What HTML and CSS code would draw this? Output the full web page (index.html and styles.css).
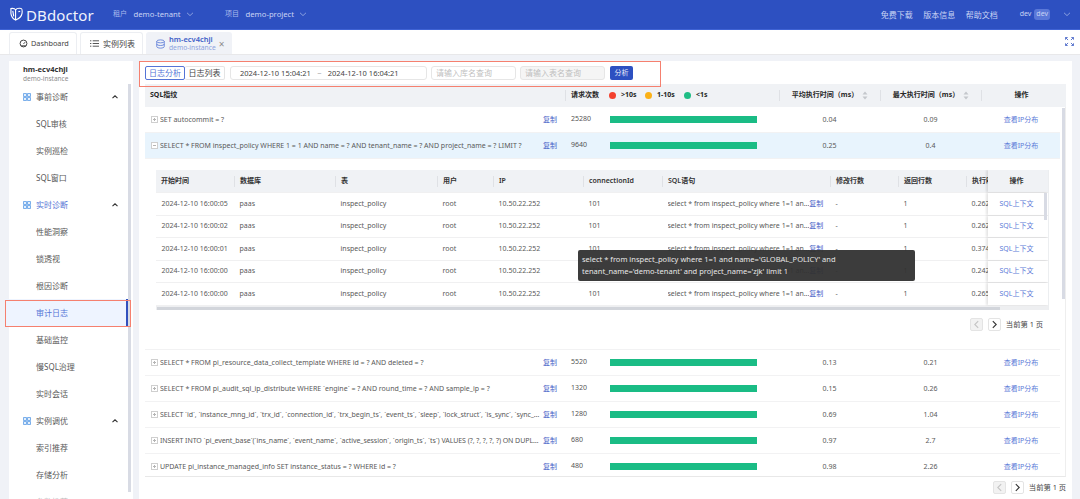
FILE: index.html
```html
<!DOCTYPE html>
<html lang="zh-CN">
<head>
<meta charset="utf-8">
<title>DBdoctor 审计日志</title>
<link rel="stylesheet" href="styles.css">
</head>
<body>
<svg class="defs" width="0" height="0" aria-hidden="true">
  <defs>
    <symbol id="grid" viewBox="0 0 8 8"><path d="M.5.5h3v3h-3zM4.5.5h3v3h-3zM.5 4.5h3v3h-3zM4.5 4.5h3v3h-3z" fill="#e3effc" stroke="#5c9ce6" stroke-width=".8"/></symbol>
    <symbol id="up" viewBox="0 0 8 8"><path d="M1.5 5.2 4 2.8l2.5 2.4" fill="none" stroke="#333" stroke-width="1.1"/></symbol>
    <symbol id="down" viewBox="0 0 8 8"><path d="M1 2.8 4 5.6l3-2.8" fill="none" stroke="#9fb2e6" stroke-width=".8"/></symbol>
    <symbol id="sort" viewBox="0 0 6 9"><path d="M3 .5 5.5 3.6H.5zM3 8.5.5 5.4h5z" fill="#c4c7cc"/></symbol>
  </defs>
</svg>
<header class="topbar">
  <div class="logo">
    <svg class="logo-mark" viewBox="0 0 14 16"><path d="M1 1.500c3-.3 4.500.2 5 1.500v11C3 12.500 1.500 10 1 7zM6 3c1-1.500 3-2 6-1.500 1 .2 1.300 2 1 5-.4 3-3 6-7 7.500M9 5l2-.5M3 4l1 6" fill="none" stroke="#fff" stroke-width="1.200"/></svg>
    <span class="logo-text">DBdoctor</span>
  </div>
  <div class="selector s-tenant"><span class="sel-label">租户</span><span>demo-tenant</span><svg class="caret"><use href="#down"/></svg></div>
  <div class="selector s-project"><span class="sel-label">项目</span><span>demo-project</span><svg class="caret"><use href="#down"/></svg></div>
  <nav class="topnav"><span>免费下载</span><span>版本信息</span><span>帮助文档</span></nav>
  <div class="user"><span>dev</span><span class="badge">dev</span><svg class="caret user-caret"><use href="#down"/></svg></div>
</header>
<div class="tabbar">
  <div class="tab tab-dash">
    <svg class="tab-icon" viewBox="0 0 10 10"><circle cx="5" cy="5" r="3.800" fill="none" stroke="#333" stroke-width="1"/><path d="M5 5.500 6.800 3.500M2.500 7.600h5" stroke="#333" stroke-width="1" fill="none"/></svg>
    <span>Dashboard</span>
  </div>
  <div class="tab tab-list">
    <svg class="tab-icon" viewBox="0 0 10 10"><path d="M0 2h1.500M0 5h1.500M0 8h1.500M3 2h7M3 5h7M3 8h7" stroke="#444" stroke-width="1" fill="none"/></svg>
    <span>实例列表</span>
  </div>
  <div class="tab tab-active">
    <svg class="db-icon" viewBox="0 0 12 12"><ellipse cx="6" cy="2.500" rx="5" ry="2" fill="none" stroke="#4c6fd4"/><path d="M1 2.500v7c0 1.100 2.200 2 5 2s5-.9 5-2v-7M1 6c0 1.100 2.200 2 5 2s5-.9 5-2" fill="none" stroke="#4c6fd4"/></svg>
    <div class="tab-text"><strong>hm-ecv4chji</strong><small>demo-instance</small></div>
    <span class="tab-close">×</span>
  </div>
  <svg class="fullscreen" viewBox="0 0 10 10"><path d="M.5 3V.5H3M.8.8l2.600 2.600M7 .5h2.500V3M9.200.8 6.600 3.400M.5 7v2.500H3M.8 9.200l2.600-2.600M9.500 7v2.500H7M9.200 9.200 6.600 6.600" fill="none" stroke="#4a68c8" stroke-width="1"/></svg>
</div>
<div class="workspace">
  <aside class="sidebar">
    <div class="inst"><strong>hm-ecv4chji</strong><small>demo-instance</small></div>
    <div class="menu">
      <div class="group"><svg class="grid-icon"><use href="#grid"/></svg><span>事前诊断</span><svg class="up-icon"><use href="#up"/></svg></div>
      <div class="item">SQL审核</div>
      <div class="item">实例巡检</div>
      <div class="item">SQL窗口</div>
      <div class="group group-on"><svg class="grid-icon"><use href="#grid"/></svg><span>实时诊断</span><svg class="up-icon"><use href="#up"/></svg></div>
      <div class="item">性能洞察</div>
      <div class="item">锁透视</div>
      <div class="item">根因诊断</div>
      <div class="item item-on">审计日志<i class="mark mark-side"></i></div>
      <div class="item">基础监控</div>
      <div class="item">慢SQL治理</div>
      <div class="item">实时会话</div>
      <div class="group"><svg class="grid-icon"><use href="#grid"/></svg><span>实例调优</span><svg class="up-icon"><use href="#up"/></svg></div>
      <div class="item">索引推荐</div>
      <div class="item">存储分析</div>
      <div class="item item-fade">参数推荐</div>
    </div>
    <i class="side-thumb"></i>
  </aside>
  <main class="main">
    <i class="mark mark-filter"></i>
    <div class="filters">
      <div class="seg"><span class="seg-on">日志分析</span><span class="seg-off">日志列表</span></div>
      <div class="field date"><span>2024-12-10 15:04:21</span><span class="tilde">~</span><span>2024-12-10 16:04:21</span></div>
      <div class="field ph">请输入库名查询</div>
      <div class="field ph disabled">请输入表名查询</div>
      <button class="go">分析</button>
    </div>
    <div class="otable">
      <div class="orow ohead">
        <div class="hc hc-first">SQL指纹</div>
        <div class="hc hc-legend">
          <span class="req">请求次数</span>
          <i class="dot red"></i><span class="lg lg1">&gt;10s</span>
          <i class="dot orange"></i><span class="lg lg2">1-10s</span>
          <i class="dot green"></i><span class="lg">&lt;1s</span>
        </div>
        <div class="hc hc-mid">平均执行时间（ms）<svg class="sort"><use href="#sort"/></svg></div>
        <div class="hc hc-mid">最大执行时间（ms）<svg class="sort"><use href="#sort"/></svg></div>
        <div class="hc hc-center">操作</div>
      </div>
      <div class="obody">
        <i class="main-thumb"></i>
        <div class="orow">
          <div class="sqlcell"><i class="exp plus"></i><span class="sql">SET autocommit = ?</span><a class="copy">复制</a></div>
          <div class="countcell"><span class="count">25280</span><i class="bar"></i></div>
          <div class="num">0.04</div><div class="num">0.09</div><a class="oplink">查看IP分布</a>
        </div>
        <div class="orow orow-on">
          <div class="sqlcell"><i class="exp"></i><span class="sql">SELECT * FROM inspect_policy WHERE 1 = 1 AND name = ? AND tenant_name = ? AND project_name = ? LIMIT ?</span><a class="copy">复制</a></div>
          <div class="countcell"><span class="count">9640</span><i class="bar"></i></div>
          <div class="num">0.25</div><div class="num">0.4</div><a class="oplink">查看IP分布</a>
        </div>
        <section class="expanded">
          <div class="itable">
            <div class="irow ihead">
              <div class="ih ih-first">开始时间</div><div class="ih">数据库</div><div class="ih">表</div><div class="ih">用户</div><div class="ih">IP</div><div class="ih">connectionId</div><div class="ih">SQL语句</div><div class="ih">修改行数</div><div class="ih">返回行数</div><div class="ih ih-clip">执行时间</div><div class="ih fixed">操作</div>
            </div>
            <div class="irow">
              <div>2024-12-10 16:00:05</div><div>paas</div><div>inspect_policy</div><div>root</div><div>10.50.22.252</div><div>101</div><div class="isql"><span>select * from inspect_policy where 1=1 an...</span><a class="copy">复制</a></div><div>-</div><div>1</div><div class="clip">0.262</div><a class="fixed ctx">SQL上下文</a>
            </div>
            <div class="irow">
              <div>2024-12-10 16:00:02</div><div>paas</div><div>inspect_policy</div><div>root</div><div>10.50.22.252</div><div>101</div><div class="isql"><span>select * from inspect_policy where 1=1 an...</span><a class="copy">复制</a></div><div>-</div><div>1</div><div class="clip">0.262</div><a class="fixed ctx">SQL上下文</a>
            </div>
            <div class="irow">
              <div>2024-12-10 16:00:01</div><div>paas</div><div>inspect_policy</div><div>root</div><div>10.50.22.252</div><div>101</div><div class="isql"><span>select * from inspect_policy where 1=1 an...</span><a class="copy">复制</a></div><div>-</div><div>1</div><div class="clip">0.374</div><a class="fixed ctx">SQL上下文</a>
            </div>
            <div class="irow">
              <div>2024-12-10 16:00:00</div><div>paas</div><div>inspect_policy</div><div>root</div><div>10.50.22.252</div><div>101</div><div class="isql"><span>select * from inspect_policy where 1=1 an...</span><a class="copy">复制</a></div><div>-</div><div>1</div><div class="clip">0.242</div><a class="fixed ctx">SQL上下文</a>
            </div>
            <div class="irow">
              <div>2024-12-10 16:00:00</div><div>paas</div><div>inspect_policy</div><div>root</div><div>10.50.22.252</div><div>101</div><div class="isql"><span>select * from inspect_policy where 1=1 an...</span><a class="copy">复制</a></div><div>-</div><div>1</div><div class="clip">0.265</div><a class="fixed ctx">SQL上下文</a>
            </div>
            <div class="hscroll"><i></i></div>
            <i class="inner-thumb"></i>
          </div>
          <div class="pager pager-in">
            <span class="pg pg-off"><svg viewBox="0 0 8 8"><path d="M5.500 1 2.500 4l3 3" fill="none" stroke="#c4c4c4"/></svg></span>
            <span class="pg"><svg viewBox="0 0 8 8"><path d="M2.500 1l3 3-3 3" fill="none" stroke="#333"/></svg></span>
            <span>当前第 1 页</span>
          </div>
        </section>
        <div class="orow">
          <div class="sqlcell"><i class="exp plus"></i><span class="sql">SELECT * FROM pi_resource_data_collect_template WHERE id = ? AND deleted = ?</span><a class="copy">复制</a></div>
          <div class="countcell"><span class="count">5520</span><i class="bar"></i></div>
          <div class="num">0.13</div><div class="num">0.21</div><a class="oplink">查看IP分布</a>
        </div>
        <div class="orow">
          <div class="sqlcell"><i class="exp plus"></i><span class="sql">SELECT * FROM pi_audit_sql_ip_distribute WHERE `engine` = ? AND round_time = ? AND sample_ip = ?</span><a class="copy">复制</a></div>
          <div class="countcell"><span class="count">1320</span><i class="bar"></i></div>
          <div class="num">0.15</div><div class="num">0.26</div><a class="oplink">查看IP分布</a>
        </div>
        <div class="orow">
          <div class="sqlcell"><i class="exp plus"></i><span class="sql ticks">SELECT `id`, `instance_mng_id`, `trx_id`, `connection_id`, `trx_begin_ts`, `event_ts`, `sleep`, `lock_struct`, `is_sync`, `sync_status`, `sync_time`</span><a class="copy">复制</a></div>
          <div class="countcell"><span class="count">1280</span><i class="bar"></i></div>
          <div class="num">0.69</div><div class="num">1.04</div><a class="oplink">查看IP分布</a>
        </div>
        <div class="orow">
          <div class="sqlcell"><i class="exp plus"></i><span class="sql ticks">INSERT INTO `pi_event_base`(`ins_name`, `event_name`, `active_session`, `origin_ts`, `ts`) VALUES (?, ?, ?, ?, ?) ON DUPLICATE KEY UPDATE</span><a class="copy">复制</a></div>
          <div class="countcell"><span class="count">680</span><i class="bar"></i></div>
          <div class="num">0.97</div><div class="num">2.7</div><a class="oplink">查看IP分布</a>
        </div>
        <div class="orow">
          <div class="sqlcell"><i class="exp plus"></i><span class="sql">UPDATE pi_instance_managed_info SET instance_status = ? WHERE id = ?</span><a class="copy">复制</a></div>
          <div class="countcell"><span class="count">480</span><i class="bar"></i></div>
          <div class="num">0.98</div><div class="num">2.26</div><a class="oplink">查看IP分布</a>
        </div>
      </div>
    </div>
    <div class="pager pager-out">
      <span class="pg pg-off"><svg viewBox="0 0 8 8"><path d="M5.500 1 2.500 4l3 3" fill="none" stroke="#c4c4c4"/></svg></span>
      <span class="pg"><svg viewBox="0 0 8 8"><path d="M2.500 1l3 3-3 3" fill="none" stroke="#333"/></svg></span>
      <span>当前第 1 页</span>
    </div>
    <div class="tooltip">select * from inspect_policy where 1=1 and name='GLOBAL_POLICY' and<br>tenant_name='demo-tenant' and project_name='zjk' limit 1</div>
  </main>
</div>
</body>
</html>
```
FILE: styles.css
```css
* { box-sizing: border-box; }
html, body { margin: 0; height: 499px; overflow: hidden; }
body {
  display: flex;
  flex-direction: column;
  background: #f0f2f7;
  color: #595959;
  font: 7px/1.2 "Noto Sans", "Noto Sans CJK SC", sans-serif;
}
i { display: block; font-style: normal; }
.defs { position: absolute; }

.topbar {
  flex: 0 0 30px;
  display: flex;
  align-items: center;
  background: #2d50c1;
  border-bottom: 1px solid #3f63d4;
  color: #c9d4f4;
  font-size: 7.7px;
}
.logo { width: 113px; display: flex; align-items: center; padding-left: 10px; }
.logo-mark { width: 13px; height: 15px; }
.logo-text { margin-left: 3px; color: #f0f3fc; font-size: 15px; letter-spacing: .1px; }
.selector { display: flex; align-items: center; }
.s-tenant { width: 112px; }
.sel-label { margin-right: 6.500px; color: #a9b9ec; font-size: 7px; }
.caret { width: 8px; height: 8px; margin-left: 5px; }
.topnav { margin-left: auto; display: flex; gap: 10.500px; font-size: 8px; }
.user { display: flex; align-items: center; margin-left: 22px; padding-right: 9px; font-size: 7px; }
.badge { margin-left: 3px; padding: 1px 2px; border-radius: 3px; background: #5a78d8; }
.user-caret { margin-left: 13px; }

.tabbar {
  flex: 0 0 25px;
  display: flex;
  align-items: flex-end;
  gap: 3px;
  padding-left: 9px;
  background: #fff;
  border-bottom: 1px solid #e8e8ea;
  color: #444;
  font-size: 8px;
}
.tab {
  height: 22px;
  display: flex;
  align-items: center;
  border: 1px solid #eceef2;
  border-bottom: 0;
  border-radius: 3px 3px 0 0;
}
.tab-dash { width: 68px; padding-left: 9px; font-size: 7.3px; }
.tab-list { width: 63px; padding-left: 9px; }
.tab-icon { width: 9px; height: 9px; margin-right: 3px; }
.tab-list .tab-icon { margin-right: 4px; }
.tab-active { width: 86px; padding-left: 9px; background: #f0f2f7; border-color: #f0f2f7; color: #4c6fd4; }
.db-icon { width: 9px; height: 10px; margin-right: 4px; flex: none; }
.tab-text { display: flex; flex-direction: column; white-space: nowrap; }
.tab-text strong { font-size: 7.5px; font-weight: 600; color: #3f5fc8; }
.tab-text small { font-size: 6.7px; color: #8da3e0; }
.tab-close { margin-left: 3px; color: #8c8c8c; font-size: 10px; }
.fullscreen { width: 9px; height: 9px; margin: 0 6px 8px auto; }

.workspace { flex: 1; min-height: 0; display: flex; gap: 6px; padding: 6px 8px 0 9px; }
.sidebar { position: relative; flex: 0 0 124px; background: #fff; color: #595959; }
.inst { display: flex; flex-direction: column; padding: 4px 0 0 14px; height: 22px; }
.inst strong { font-size: 7.5px; font-weight: 700; color: #333; }
.inst small { font-size: 6.5px; color: #8c8c8c; line-height: 10px; }
.group, .item { height: 27px; display: flex; align-items: center; font-size: 8px; }
.group { padding-left: 14px; position: relative; color: #595959; }
.group-on { color: #5474d6; }
.grid-icon { width: 8px; height: 8px; margin-right: 5px; }
.up-icon { width: 8px; height: 8px; margin-left: 43px; }
.item { padding-left: 27px; position: relative; }
.item-on { color: #5474d6; background: #eef4ff; margin: 0 5px 0 -4px; padding-left: 31px; border-right: 2px solid #3150bd; }
.item-fade { opacity: .4; }
.mark { position: absolute; border: 1.5px solid #f5806f; pointer-events: none; }
.mark-side { left: 0; top: 1px; width: 126px; height: 27px; z-index: 2; }
.mark-filter { left: 0; top: 0; width: 522px; height: 26px; z-index: 2; }
.side-thumb { position: absolute; left: 119px; top: 23px; width: 3px; height: 408px; background: #d8dbe4; }

.main { position: relative; flex: 1; min-width: 0; background: #fff; padding: 0 6px; }
.filters { height: 23px; display: flex; align-items: center; padding-top: 1px; gap: 4px; }
.seg { display: flex; margin-right: 1px; font-size: 8px; }
.seg span { width: 40px; height: 14px; display: flex; align-items: center; justify-content: center; border-radius: 2px; }
.seg-on { border: 1px solid #5474d6; color: #5474d6; }
.seg-off { border: 1px solid #e4e4e4; border-left: 0; color: #444; }
.field { height: 14px; display: flex; align-items: center; border: 1px solid #e6e6e6; border-radius: 3px; padding-left: 4px; font-size: 8px; }
.date { width: 197px; padding-left: 9px; color: #444; font-size: 7.500px; }
.tilde { margin: 0 6.300px; color: #999; }
.ph { width: 85px; color: #bfbfbf; }
.disabled { background: #f5f5f5; }
.go { width: 23px; height: 14px; margin-left: 1px; padding: 0; border: 0; border-radius: 2px; background: #2d50c1; color: #e6ebfa; font: inherit; }

.orow {
  display: grid;
  grid-template-columns: 420px 214px 101px 101px 80px;
  align-items: center;
  height: 26px;
  padding-top: 1px;
  border-bottom: 1px solid #f2f2f3;
}
.ohead { height: 23px; padding: 0 5px 0 0; background: #f0f2f5; border: 0; color: #262626; font-weight: 700; }
.hc { display: flex; align-items: center; height: 11px; border-left: 1px solid #dfe1e5; }
.hc-first { border: 0; padding-left: 5px; }
.hc-legend { padding-left: 5px; }
.req { width: 38px; }
.dot { width: 7px; height: 7px; border-radius: 50%; margin-right: 5px; }
.red { background: #f3412f; }
.orange { background: #fbb117; }
.green { background: #1fbd85; }
.lg1 { width: 24px; }
.lg2 { width: 27px; }
.hc-mid { justify-content: center; }
.hc-center { justify-content: center; }
.sort { width: 6px; height: 9px; margin-left: 4px; }
.obody { position: relative; height: 370px; overflow: hidden; padding-right: 5px; border-right: 1px solid #eee; border-bottom: 1px solid #e8e8e8; }
.main-thumb { position: absolute; right: 0; top: 1px; width: 3px; height: 191px; background: #d8dbe4; }
.orow-on { background: #e8f4fd; }
.sqlcell { display: flex; align-items: center; min-width: 0; padding-left: 6px; color: #595959; }
.exp { position: relative; flex: 0 0 7px; height: 7px; margin-right: 2px; border: 1px solid #cfcfcf; background: #fff; }
.exp::before { content: ""; position: absolute; left: 1px; top: 2px; width: 3px; height: 1px; background: #b5b5b5; }
.plus::after { content: ""; position: absolute; left: 2px; top: 1px; width: 1px; height: 3px; background: #b5b5b5; }
.sql { width: 380px; white-space: nowrap; overflow: hidden; text-overflow: ellipsis; }
.ticks { letter-spacing: -.06px; }
.copy { margin-left: 3px; color: #4560c6; white-space: nowrap; }
.countcell { display: flex; align-items: center; padding-left: 6px; }
.count { width: 39px; margin-bottom: 1px; color: #555; }
.bar { width: 147px; height: 7px; background: #1abc85; }
.num { text-align: center; }
.oplink { text-align: center; color: #5d7bd8; }

.expanded { height: 191px; padding: 11px 17px 0 11px; border-bottom: 1px solid #f2f2f3; }
.itable { position: relative; width: 893px; height: 140px; border: 0 solid #eceef0; border-right-width: 1px; overflow: hidden; }
.irow {
  display: grid;
  grid-template-columns: 78px 101px 102px 56px 90px 79px 168px 68px 68px 22px 61px;
  align-items: center;
  height: 22.500px;
  border-bottom: 1px solid #f0f0f1;
  white-space: nowrap;
}
.irow > div { padding-left: 5.500px; overflow: hidden; }
.ihead { height: 23px; background: #f0f2f5; color: #333; font-weight: 600; }
.irow > .ih { height: 11px; display: flex; align-items: center; border-left: 1px solid #dfe1e5; padding-left: 5px; }
.irow > .ih-first { border: 0; }
.isql { display: flex; }
.isql .copy { margin-left: 0; }
.isql span { overflow: hidden; }
.clip, .ih-clip { overflow: hidden; }
.irow > .fixed { height: 100%; display: flex; align-items: center; justify-content: center; padding: 0 4px 0 0; background: #fff; box-shadow: -2px 0 2px rgba(0,0,0,.1); }
.ihead > .fixed.ih { height: 22px; background: #f0f2f5; border-left: 0; }
.ctx { color: #5d7bd8; }
.hscroll { height: 5px; background: #eeeff1; padding: 1px 0 0 1px; position: relative; z-index: 1; }
.hscroll i { width: 843px; height: 3px; background: #d2d5db; }
.inner-thumb { position: absolute; right: 1px; top: 23px; width: 3px; height: 27px; background: #d8dbe4; }
.pager { display: flex; align-items: center; justify-content: flex-end; gap: 5px; color: #444; font-size: 7.300px; }
.pager-in { margin-top: 8px; }
.pager-out { margin-top: 4px; }
.pg { width: 13px; height: 13px; display: flex; align-items: center; justify-content: center; border: 1px solid #e4e4e4; border-radius: 2px; }
.pg svg { width: 9px; height: 9px; }
.pg-off { background: #f2f2f2; }
.tooltip {
  position: absolute;
  left: 439px;
  top: 189px;
  z-index: 3;
  width: 337px;
  height: 31px;
  padding: 3px 4px;
  border-radius: 2px;
  background: rgba(50,50,50,.95);
  color: #e8e8e8;
  font-size: 7.5px;
  line-height: 12px;
}
```
